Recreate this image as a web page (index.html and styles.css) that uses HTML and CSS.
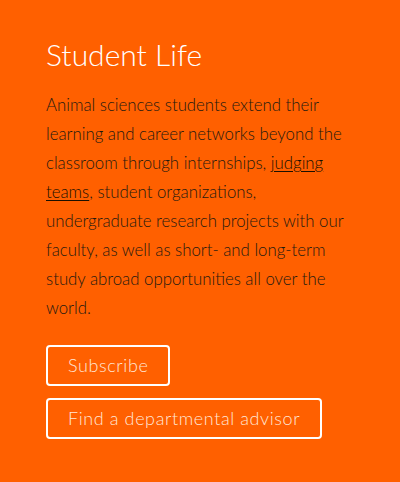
FILE: index.html
```html
<!DOCTYPE html>
<html lang="en">
<head>
<meta charset="utf-8">
<title>Student Life</title>
<link rel="stylesheet" href="styles.css">
</head>
<body>
<section class="promo">
  <h2 class="promo-title">Student Life</h2>
  <p class="promo-text">Animal sciences students extend their learning and career networks beyond the classroom through internships, <a class="promo-link" href="#">judging teams</a>, student organizations, undergraduate research projects with our faculty, as well as short- and long-term study abroad opportunities all over the world.</p>
  <div class="promo-actions">
    <a class="btn" href="#">Subscribe</a>
    <a class="btn" href="#">Find a departmental advisor</a>
  </div>
</section>
</body>
</html>
```
FILE: styles.css
```css
html, body {
  margin: 0;
  padding: 0;
  background: #ff6000;
  height: 100%;
}
.promo {
  padding: 34px 46px 40px;
  font-family: "Lato", "Open Sans", sans-serif;
}
.promo-title {
  margin: 0;
  font-weight: 300;
  font-size: 30px;
  line-height: 40px;
  color: #fff;
}
.promo-text {
  margin: 16px 0 0;
  font-size: 16.8px;
  line-height: 29px;
  font-weight: 300;
  color: #1e1a10;
}
.promo-link {
  color: #1a1000;
  text-decoration: underline;
  text-underline-offset: 2px;
}
.promo-actions {
  display: flex;
  flex-direction: column;
  align-items: flex-start;
  gap: 12px;
  margin-top: 23px;
}
.btn {
  display: inline-block;
  box-sizing: border-box;
  height: 41px;
  line-height: 37px;
  padding: 0 20px;
  border: 2px solid #fff;
  border-radius: 4px;
  color: #ffe6d6;
  font-size: 18px;
  font-weight: 300;
  letter-spacing: 0.6px;
  text-decoration: none;
}
```
